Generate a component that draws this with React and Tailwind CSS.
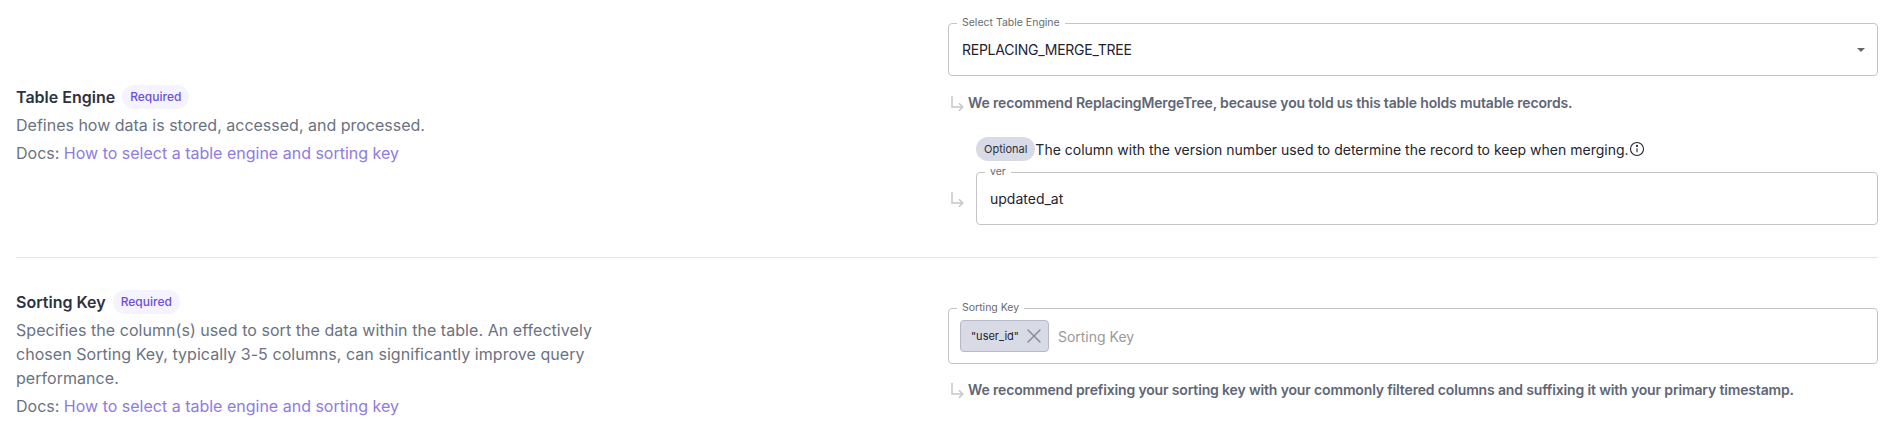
import React from "react";
import { X } from "lucide-react";

const ArrowHint = ({ className = "" }) => (
  <svg className={className} width="16" height="16" viewBox="0 0 16 16" fill="none" stroke="#c4c6cc" strokeWidth="1.5">
    <path d="M3 1v11h10.5" />
    <path d="M10 8.2l3.7 3.8L10 15.8" />
  </svg>
);

const Required = () => (
  <span className="inline-flex h-6 items-center rounded-full bg-[#f5f3ff] px-[8px] text-[12px] font-medium text-[#6d4fd8]">
    Required
  </span>
);

const Docs = () => (
  <p className="mt-[4px] text-[16px] leading-6 text-[#6b7280]">
    Docs: <a className="text-[#8f7bdf]">How to select a table engine and sorting key</a>
  </p>
);

const Field = ({ label, className = "", children }) => (
  <div className={`relative rounded border border-[#c4c4c4] ${className}`}>
    <span className="absolute -top-[8px] left-[8px] bg-white px-[5px] text-[10.5px] leading-[14px] text-[#6b6b6b]">{label}</span>
    {children}
  </div>
);

export default function App() {
  return (
    <div className="w-[1893px] h-[446px] overflow-hidden bg-white px-4 pr-[15px] font-['Inter',sans-serif]">
      <div className="flex h-[258px] items-center border-b border-[#e2e4e8]">
        <div className="flex-1 mb-[7px]">
          <div className="flex items-center gap-[7px]">
            <h3 className="text-[16px] leading-6 font-semibold text-[#2d3142]">Table Engine</h3>
            <Required />
          </div>
          <p className="mt-[4px] text-[16px] leading-6 text-[#6b7280]">Defines how data is stored, accessed, and processed.</p>
          <Docs />
        </div>
        <div className="w-[930px] self-start pt-[23px]">
          <Field label="Select Table Engine" className="flex h-[53px] items-center justify-between pl-[13px] pr-[11px]">
            <span className="text-[14px] tracking-[-0.25px] text-[#1f2230]">REPLACING_MERGE_TREE</span>
            <svg width="10" height="6" viewBox="0 0 10 6" fill="#666"><path d="M1 1h8L5 5z" /></svg>
          </Field>
          <div className="mt-[17px] flex items-center gap-[1px] text-[14px] leading-5 font-semibold tracking-[-0.15px] text-[#5f6675]">
            <ArrowHint className="ml-[1px]" />
            <span className="ml-[2px]">We recommend ReplacingMergeTree, because you told us this table holds mutable records.</span>
          </div>
          <div className="mt-[24px] ml-[28px] flex items-center">
            <span className="inline-flex h-6 items-center rounded-full bg-[#d8dae6] px-[8px] text-[11px] text-[#2d3142]">Optional</span>
            <span className="text-[14px] text-[#23252f]">The column with the version number used to determine the record to keep when merging.</span>
            <svg width="16" height="16" viewBox="0 0 16 16" fill="none" stroke="#23252f" strokeWidth="1.1">
              <circle cx="8" cy="8" r="6.5" />
              <path d="M8 7.2v4" />
              <circle cx="8" cy="4.9" r=".5" fill="#23252f" />
            </svg>
          </div>
          <div className="mt-[11px] flex items-center">
            <ArrowHint className="ml-[1px] mr-[11px]" />
            <Field label="ver" className="flex h-[53px] flex-1 items-center pl-[13px]">
              <span className="text-[14px] text-[#1f2230]">updated_at</span>
            </Field>
          </div>
        </div>
      </div>
      <div className="flex items-start pt-[32px]">
        <div className="flex-1">
          <div className="flex items-center gap-[7px]">
            <h3 className="text-[16px] leading-6 font-semibold text-[#2d3142]">Sorting Key</h3>
            <Required />
          </div>
          <p className="mt-[4px] w-[600px] text-[16px] leading-6 tracking-[0.05px] text-[#6b7280]">
            Specifies the column(s) used to sort the data within the table. An effectively chosen Sorting Key, typically 3-5 columns, can significantly improve query performance.
          </p>
          <Docs />
        </div>
        <div className="w-[930px] pt-[18px]">
          <Field label="Sorting Key" className="flex h-[56px] items-center pl-[11px]">
            <span className="flex h-8 items-center gap-[3px] rounded border border-[#b6b9c8] bg-[#d8dae6] pl-[10px] pr-[2px] text-[11px] text-[#23252f]">
              "user_id"
              <X size={24} strokeWidth={1.5} color="#8b8d96" />
            </span>
            <span className="ml-[9px] text-[14px] text-[#9a9a9a]">Sorting Key</span>
          </Field>
          <div className="mt-[16px] flex items-center gap-[1px] text-[14px] leading-5 font-semibold tracking-[-0.15px] text-[#5f6675]">
            <ArrowHint className="ml-[1px]" />
            <span className="ml-[2px]">We recommend prefixing your sorting key with your commonly filtered columns and suffixing it with your primary timestamp.</span>
          </div>
        </div>
      </div>
    </div>
  );
}
